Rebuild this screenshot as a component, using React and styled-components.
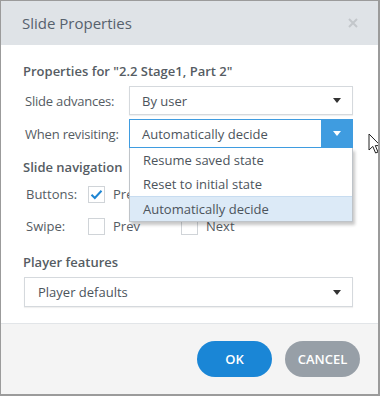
import React from "react";
import styled, { createGlobalStyle } from "styled-components";

const GlobalStyle = createGlobalStyle`
  html, body {
    margin: 0;
    padding: 0;
    background: #ffffff;
  }
  body {
    font-family: "Open Sans", "Noto Sans", "Liberation Sans", sans-serif;
  }
`;

const Dialog = () => {
  return (
    <Frame>
      <Header>
        <Title>Slide Properties</Title>
        <svg width="10" height="10" viewBox="0 0 10 10">
          <path d="M1 1 L9 9 M9 1 L1 9" stroke="#c3c7cb" strokeWidth="2" />
        </svg>
      </Header>
      <Body>
        <SectionTitle>Properties for "2.2 Stage1, Part 2"</SectionTitle>
        <Row>
          <Label>Slide advances:</Label>
          <Select>
            <SelectText>By user</SelectText>
            <Caret />
          </Select>
        </Row>
        <Row $gap={4}>
          <Label>When revisiting:</Label>
          <SelectWrap>
            <Select $open>
              <SelectText>Automatically decide</SelectText>
              <CaretButton>
                <Caret $light />
              </CaretButton>
            </Select>
            <Menu>
              <MenuItem>Resume saved state</MenuItem>
              <MenuItem>Reset to initial state</MenuItem>
              <MenuItem $active>Automatically decide</MenuItem>
            </Menu>
          </SelectWrap>
        </Row>
        <SectionTitle $top={10} $bottom={9}>Slide navigation</SectionTitle>
        <CheckRow>
          <SmallLabel>Buttons:</SmallLabel>
          <CheckItem>
            <Box>
              <svg width="13" height="11" viewBox="0 0 13 11">
                <path d="M1.5 5.8 L4.8 9 L11.5 1.8" fill="none" stroke="#1f86d3" strokeWidth="2" />
              </svg>
            </Box>
            <span>Prev</span>
          </CheckItem>
          <CheckItem>
            <Box />
            <span>Next</span>
          </CheckItem>
        </CheckRow>
        <CheckRow $top={14}>
          <SmallLabel>Swipe:</SmallLabel>
          <CheckItem>
            <Box />
            <span>Prev</span>
          </CheckItem>
          <CheckItem>
            <Box />
            <span>Next</span>
          </CheckItem>
        </CheckRow>
        <SectionTitle $top={18}>Player features</SectionTitle>
        <FullSelect>
          <SelectText $pad={13}>Player defaults</SelectText>
          <Caret />
        </FullSelect>
      </Body>
      <Footer>
        <Button>OK</Button>
        <Button $secondary>CANCEL</Button>
      </Footer>
      <Cursor>
        <svg width="14" height="22" viewBox="0 0 14 22">
          <path
            d="M1 1 L1 17 L4.8 13.4 L7.6 20 L10 19 L7.3 12.6 L12.5 12.6 Z"
            fill="#ffffff"
            stroke="#222222"
            strokeWidth="1"
            strokeLinejoin="round"
          />
        </svg>
      </Cursor>
    </Frame>
  );
};

const Frame = styled.div`
  position: relative;
  width: 380px;
  height: 396px;
  box-sizing: border-box;
  border: 1px solid #9b9b9b;
  border-right-width: 2px;
  border-bottom-width: 2px;
  display: flex;
  flex-direction: column;
  background: #ffffff;
  overflow: hidden;
`;

const Header = styled.div`
  height: 44px;
  flex: none;
  background: #dfe3e7;
  display: flex;
  align-items: center;
  justify-content: space-between;
  padding: 0 20px 0 21px;
`;

const Title = styled.div`
  font-size: 15px;
  color: #56616d;
`;

const Body = styled.div`
  flex: 1;
  padding: 17px 25px 0 22px;
  display: flex;
  flex-direction: column;
`;

const SectionTitle = styled.div`
  font-size: 13px;
  font-weight: 600;
  color: #555c63;
  line-height: 18px;
  margin-top: ${(p) => p.$top || 0}px;
  margin-bottom: ${(p) => (p.$bottom !== undefined ? p.$bottom : 6)}px;
`;

const Row = styled.div`
  display: flex;
  align-items: center;
  margin-top: ${(p) => p.$gap || 0}px;
`;

const Label = styled.div`
  width: 104px;
  padding-left: 2px;
  font-size: 13px;
  color: #555c63;
  letter-spacing: -0.2px;
`;

const SelectWrap = styled.div`
  position: relative;
  flex: 1;
`;

const Select = styled.div`
  flex: 1;
  height: 29px;
  box-sizing: border-box;
  border: 1px solid ${(p) => (p.$open ? "#3f9ce0" : "#d5d9dd")};
  box-shadow: ${(p) => (p.$open ? "none" : "0 1px 1px rgba(0,0,0,0.06)")};
  display: flex;
  align-items: center;
  justify-content: space-between;
  padding-right: ${(p) => (p.$open ? 0 : 11)}px;
  background: #ffffff;
`;

const FullSelect = styled(Select)`
  flex: none;
  height: 30px;
  margin-left: 1px;
`;

const SelectText = styled.span`
  padding-left: ${(p) => p.$pad || 12}px;
  font-size: 13px;
  color: #4c545c;
`;

const Caret = styled.span`
  width: 0;
  height: 0;
  border-left: 4.5px solid transparent;
  border-right: 4.5px solid transparent;
  border-top: 5px solid ${(p) => (p.$light ? "#ffffff" : "#333333")};
`;

const CaretButton = styled.div`
  width: 31px;
  align-self: stretch;
  background: #3f9ce0;
  display: flex;
  align-items: center;
  justify-content: center;
`;

const Menu = styled.div`
  position: absolute;
  left: 0;
  right: 0;
  top: 100%;
  background: #ffffff;
  border: 1px solid #bfc4c9;
  border-top: none;
  box-shadow: 2px 3px 3px rgba(0, 0, 0, 0.22);
  z-index: 2;
`;

const MenuItem = styled.div`
  height: 24px;
  line-height: 24px;
  padding-left: 13px;
  font-size: 13px;
  color: #4c545c;
  background: ${(p) => (p.$active ? "#dceaf7" : "#ffffff")};
  border-top: ${(p) => (p.$active ? "1px solid #c7dcf0" : "none")};
`;

const CheckRow = styled.div`
  display: flex;
  align-items: center;
  margin-top: ${(p) => p.$top || 0}px;
  font-size: 13px;
  color: #555c63;
`;

const SmallLabel = styled.div`
  width: 65px;
  box-sizing: border-box;
  padding-left: 3px;
`;

const CheckItem = styled.div`
  width: 93px;
  display: flex;
  align-items: center;
  gap: 8px;
`;

const Box = styled.div`
  width: 17px;
  height: 17px;
  box-sizing: border-box;
  border: 1px solid #d0d4d8;
  background: #ffffff;
  display: flex;
  align-items: center;
  justify-content: center;
`;

const Footer = styled.div`
  height: 70px;
  flex: none;
  background: #f4f4f4;
  border-top: 1px solid #e2e5e8;
  display: flex;
  align-items: center;
  justify-content: flex-end;
  gap: 13px;
  padding-right: 18px;
`;

const Button = styled.button`
  width: 75px;
  height: 36px;
  border: none;
  border-radius: 18px;
  background: ${(p) => (p.$secondary ? "#979fa7" : "#1a86d6")};
  color: #ffffff;
  font-family: "Open Sans", "Noto Sans", sans-serif;
  font-size: 13px;
  font-weight: 600;
  padding: 0;
`;

const Cursor = styled.div`
  position: absolute;
  left: 367px;
  top: 132px;
  z-index: 3;
  line-height: 0;
`;

export default function App() {
  return (
    <>
      <GlobalStyle />
      <Dialog />
    </>
  );
}
